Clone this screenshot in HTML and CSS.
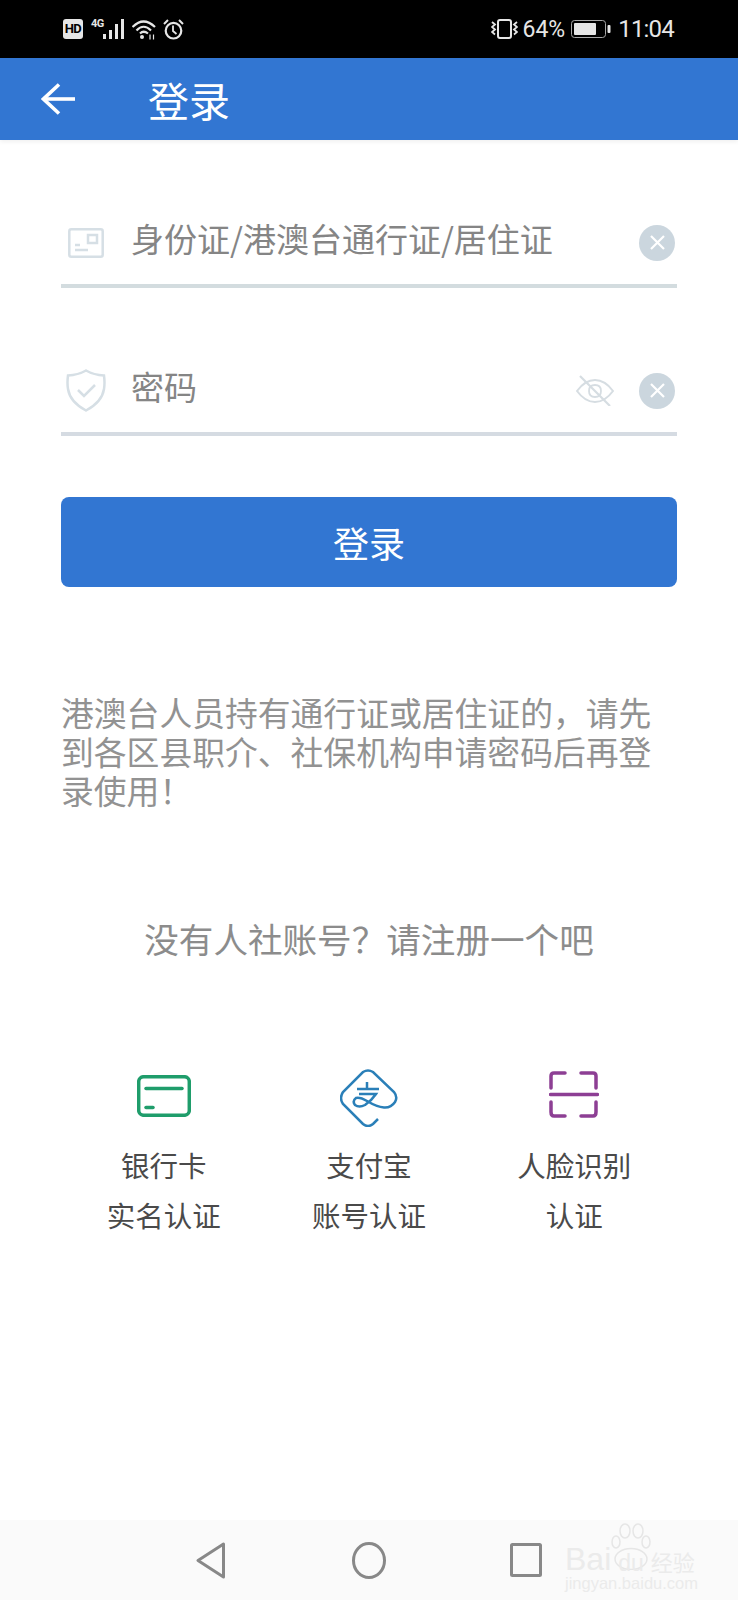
FILE: index.html
```html
<!DOCTYPE html>
<html lang="zh-CN">
<head>
    <meta charset="UTF-8">
    <meta name="viewport" content="width=device-width, initial-scale=1.0">
    <title>登录</title>
    <link rel="stylesheet" href="styles.css">
</head>
<body>
    <div class="status-bar">
        <div class="status-left">
            <span class="hd">HD</span>
            <div class="net">
                <span class="net-label">4G</span>
                <svg width="22" height="21" viewBox="0 0 22 21">
                    <rect x="0" y="15" width="3" height="5" fill="#e6e6e6"/>
                    <rect x="6" y="11" width="3" height="9" fill="#e6e6e6"/>
                    <rect x="12" y="5" width="3" height="15" fill="#e6e6e6"/>
                    <rect x="18" y="0" width="3" height="20" fill="#e6e6e6"/>
                </svg>
            </div>
            <svg class="ic-wifi" width="24" height="21" viewBox="0 0 24 21" fill="none" stroke="#e6e6e6" stroke-width="2.200">
                <path d="M0.500 8Q11.500-3 23 8"/>
                <path d="M4.500 11.500Q11.500 4 19 11.500"/>
                <path d="M8 14.500Q11.500 11 16 14.500"/>
                <circle cx="10" cy="18" r="2" fill="#e6e6e6" stroke="none"/>
                <path d="M18 15.500v5M21.500 15.500v5" stroke-width="1.200"/>
            </svg>
            <svg class="ic-alarm" width="21" height="21" viewBox="0 0 21 21" fill="none" stroke="#e6e6e6" stroke-width="2.200">
                <circle cx="10.500" cy="11.700" r="7.800"/>
                <path d="M10 6.500v5.500l3.500 3" stroke-width="1.800"/>
                <path d="M1 5l4-4M20 5l-4-4" stroke-width="2"/>
            </svg>
        </div>
        <div class="status-right">
            <svg width="27" height="20" viewBox="0 0 27 20" fill="none" stroke="#e6e6e6">
                <rect x="7" y="1" width="13" height="18" rx="2" stroke-width="2"/>
                <path d="M1 3l3 2.500-3 2.500 3 2.500-3 2.500 3 2.500" stroke-width="1.800"/>
                <path d="M26 3l-3 2.500 3 2.500-3 2.500 3 2.500-3 2.500" stroke-width="1.800"/>
            </svg>
            <span class="pct">64%</span>
            <svg class="ic-batt" width="40" height="18" viewBox="0 0 40 18">
                <rect x="0.500" y="0.500" width="34" height="17" rx="3" fill="none" stroke="#a8a8a8"/>
                <rect x="3" y="3" width="22" height="12" rx="1" fill="#e6e6e6"/>
                <rect x="36.500" y="5" width="3" height="8" rx="1" fill="#e6e6e6"/>
            </svg>
            <span class="clock">11:04</span>
        </div>
    </div>

    <header class="app-bar">
        <svg class="back" width="34" height="32" viewBox="0 0 34 32" fill="none" stroke="#fff" stroke-width="3.600">
            <path d="M2 16H34"/>
            <path d="M18 1.500L2.500 16 18 30.500"/>
        </svg>
        <h1 class="app-title">登录</h1>
    </header>

    <main class="content">
        <div class="field">
            <svg class="field-icon" width="36" height="30" viewBox="0 0 36 30" fill="none" stroke="#d6dfe5" stroke-width="2.500">
                <rect x="1.300" y="1.300" width="33.400" height="27.400" rx="2"/>
                <rect x="20" y="7" width="9" height="8"/>
                <path d="M7 17h5M7 22h13"/>
            </svg>
            <span class="field-text">身份证/港澳台通行证/居住证</span>
            <span class="clear"><svg width="17" height="17" viewBox="0 0 17 17" stroke="#fff" stroke-width="2.200"><path d="M2 2l13 13M15 2L2 15"/></svg></span>
        </div>
        <div class="field field-pwd">
            <svg class="field-icon shield" width="40" height="43" viewBox="0 0 40 43" fill="none" stroke="#d6dfe5" stroke-width="2.500">
                <path d="M20 1.500Q28 6 38 6.500 39 14 38 20 36 33 20 41.500 4 33 2 20 1 14 2 6.500 12 6 20 1.500Z"/>
                <path d="M12 21l6 6 11-11"/>
            </svg>
            <span class="field-text">密码</span>
            <svg class="eye" width="38" height="31" viewBox="0 0 38 31" fill="none" stroke="#d6dde2" stroke-width="2">
                <path d="M1 16Q9 5 19 5T37 16Q29 27 19 27T1 16Z"/>
                <path d="M13 16q0-6 6-6t6 6-6 6-6-6z" stroke-width="1.800"/>
                <path d="M4 1l30 30" stroke-width="2.200"/>
            </svg>
            <span class="clear"><svg width="17" height="17" viewBox="0 0 17 17" stroke="#fff" stroke-width="2.200"><path d="M2 2l13 13M15 2L2 15"/></svg></span>
        </div>

        <button class="login-btn">登录</button>

        <p class="notice">港澳台人员持有通行证或居住证的，请先到各区县职介、社保机构申请密码后再登录使用！</p>
        <p class="register">没有人社账号？请注册一个吧</p>

        <div class="methods">
            <div class="method">
                <div class="icon-box">
                    <svg width="54" height="42" viewBox="0 0 54 42" fill="none" stroke="#1f9d6b" stroke-width="3.500">
                        <rect x="1.700" y="1.700" width="50.600" height="38.600" rx="5"/>
                        <path d="M9 13.500h36" stroke-linecap="round"/>
                        <path d="M9 32.500h7" stroke-linecap="round"/>
                    </svg>
                </div>
                <div class="method-text">银行卡<br>实名认证</div>
            </div>
            <div class="method">
                <div class="icon-box">
                    <svg class="ic-alipay" width="58" height="58" viewBox="0 0 58 58" fill="none" stroke="#2a7fb8" stroke-width="2.500">
                        <path d="M38 50L33 55Q28 59 23 55L3 35Q-1 29 3 23L23 3Q28 0 33 3L54 23Q58 28 55 33 51 39 44 38.500 37 38 27 32 20 28 16 29 12 32 15 36 19 39 25 36 32 31 36 25H19"/>
                        <path d="M17 20H39M27 13V20"/>
                    </svg>
                </div>
                <div class="method-text">支付宝<br>账号认证</div>
            </div>
            <div class="method">
                <div class="icon-box">
                    <svg class="ic-face" width="50" height="47" viewBox="0 0 50 47" fill="none" stroke="#8d3f94" stroke-width="3.500" stroke-linecap="round">
                        <path d="M16 2H5Q2 2 2 5V17"/>
                        <path d="M32 2H44Q47 2 47 5V17"/>
                        <path d="M1.500 23.500H48.500"/>
                        <path d="M2 31V41Q2 45 5 45H16"/>
                        <path d="M47 31V41Q47 45 44 45H32"/>
                    </svg>
                </div>
                <div class="method-text">人脸识别<br>认证</div>
            </div>
        </div>
    </main>

    <nav class="nav-bar">
        <svg width="29" height="37" viewBox="0 0 29 37" fill="none" stroke="#888" stroke-width="3" stroke-linejoin="round"><path d="M27.500 2V35L2 18.500Z"/></svg>
        <svg width="34" height="37" viewBox="0 0 34 37" fill="none" stroke="#888" stroke-width="3"><ellipse cx="17" cy="18.500" rx="15.500" ry="17"/></svg>
        <svg width="32" height="34" viewBox="0 0 32 34" fill="none" stroke="#888" stroke-width="3" stroke-linejoin="round"><rect x="1.500" y="1.500" width="29" height="31" rx="1"/></svg>
        <div class="watermark">
            <svg class="paw" width="40" height="48" viewBox="0 0 40 48" fill="none" stroke="#e6e6e6" stroke-width="1.500">
                <ellipse cx="14" cy="9" rx="5" ry="7"/>
                <ellipse cx="27" cy="9" rx="5" ry="7"/>
                <ellipse cx="5" cy="20" rx="4" ry="6"/>
                <ellipse cx="35" cy="20" rx="4" ry="6"/>
                <ellipse cx="20" cy="37" rx="16" ry="10.500"/>
            </svg>
            <div class="wm-main"><span>Bai</span><span class="wm-du">du</span><span class="wm-cn">经验</span></div>
            <div class="wm-sub">jingyan.baidu.com</div>
        </div>
    </nav>
</body>
</html>
```

FILE: styles.css
```css
body {
    margin: 0;
    width: 738px;
    height: 1600px;
    display: flex;
    flex-direction: column;
    background-color: #fff;
    font-family: "Noto Sans CJK SC", "Noto Sans", sans-serif;
    overflow: hidden;
}
.status-bar {
    height: 58px;
    flex: none;
    background-color: #000;
    color: #e6e6e6;
    display: flex;
    justify-content: space-between;
    align-items: center;
    padding: 0 64px 0 63px;
    font-family: Roboto, sans-serif;
}
.status-left, .status-right {
    display: flex;
    align-items: center;
}
.hd {
    width: 20px;
    height: 20px;
    border-radius: 3px;
    background-color: #e6e6e6;
    color: #000;
    font-size: 13px;
    font-weight: 700;
    line-height: 20px;
    letter-spacing: -0.5px;
    text-align: center;
}
.net {
    display: flex;
    align-items: flex-end;
    margin-left: 8px;
    height: 21px;
}
.net-label {
    width: 12px;
    font-size: 11px;
    font-weight: 700;
    line-height: 10px;
    letter-spacing: -0.5px;
    align-self: flex-start;
}
.ic-wifi {
    margin-left: 7px;
}
.ic-alarm {
    margin-left: 7px;
}
.pct {
    font-size: 23px;
    margin-left: 5px;
}
.ic-batt {
    margin-left: 6px;
}
.clock {
    font-size: 24px;
    letter-spacing: -0.8px;
    margin-left: 7px;
}
.app-bar {
    height: 82px;
    flex: none;
    background-color: #3276d2;
    display: flex;
    align-items: center;
    padding-left: 41px;
    box-shadow: 0 2px 4px rgba(0, 0, 0, 0.06);
}
.app-title {
    margin: 0 0 0 73px;
    font-size: 41px;
    font-weight: 400;
    color: #fff;
}
.content {
    flex: 1;
    padding: 73px 61px 0;
}
.field {
    height: 75px;
    box-sizing: border-box;
    padding-bottom: 12px;
    border-bottom: 4px solid #d3dcdf;
    display: flex;
    align-items: center;
}
.field-pwd {
    margin-top: 73px;
    border-bottom-color: #d5dbe2;
}
.field-icon {
    margin-left: 7px;
    margin-right: 27px;
}
.shield {
    margin-left: 5px;
    margin-right: 25px;
}
.field-text {
    flex: 1;
    font-size: 33px;
    line-height: 46px;
    margin-bottom: 10px;
    color: #858585;
}
.eye {
    margin-right: 25px;
}
.clear {
    width: 36px;
    height: 36px;
    border-radius: 50%;
    background-color: #cbd6de;
    display: flex;
    align-items: center;
    justify-content: center;
    margin-right: 2px;
}
.login-btn {
    display: block;
    width: 100%;
    height: 90px;
    margin-top: 61px;
    border: none;
    border-radius: 8px;
    background-color: #3276d2;
    color: #fff;
    font-family: inherit;
    font-size: 36px;
}
.notice {
    margin: 105px 0 0;
    font-size: 32.800px;
    line-height: 39px;
    color: #929292;
}
.register {
    margin: 104px 0 0;
    font-size: 34.600px;
    line-height: 50px;
    color: #8c8c8c;
    text-align: center;
}
.methods {
    display: grid;
    grid-template-columns: repeat(3, 1fr);
    margin-top: 103px;
}
.method {
    display: flex;
    flex-direction: column;
    align-items: center;
}
.icon-box {
    height: 60px;
    display: flex;
    align-items: center;
}
.ic-alipay {
    margin-top: 4px;
}
.ic-face {
    margin-bottom: 3px;
}
.method-text {
    margin-top: 14px;
    font-size: 28.500px;
    line-height: 50px;
    color: #4a4a4a;
    text-align: center;
}
.nav-bar {
    position: relative;
    height: 80px;
    flex: none;
    background-color: #fafafa;
    display: flex;
    align-items: center;
    justify-content: center;
}
.nav-bar > svg:nth-child(1) {
    margin-right: 127px;
}
.nav-bar > svg:nth-child(3) {
    margin-left: 124px;
}
.watermark {
    position: absolute;
    left: 565px;
    top: 0;
    width: 136px;
    color: #ebebeb;
}
.paw {
    position: absolute;
    left: 46px;
    top: 2px;
}
.wm-main {
    position: absolute;
    top: 19px;
    left: 0;
    width: 136px;
    display: flex;
    align-items: center;
    font-family: "Liberation Sans", sans-serif;
    font-size: 32px;
    line-height: 32px;
    white-space: nowrap;
}
.wm-du {
    font-size: 23px;
    margin: 0 7px 0 7px;
    padding-top: 8px;
}
.wm-cn {
    font-family: "Noto Sans CJK SC", sans-serif;
    font-size: 22px;
    padding-top: 4px;
}
.wm-sub {
    position: absolute;
    top: 54px;
    left: 0;
    width: 136px;
    font-family: "Liberation Sans", sans-serif;
    font-size: 16.500px;
    line-height: 18px;
    white-space: nowrap;
}
```
